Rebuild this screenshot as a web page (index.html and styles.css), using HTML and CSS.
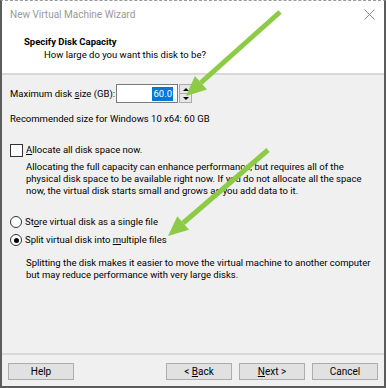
FILE: index.html
```html
<!DOCTYPE html>
<html lang="en">
<head>
    <meta charset="UTF-8">
    <title>New Virtual Machine Wizard</title>
    <link rel="stylesheet" href="styles.css">
</head>
<body>
    <div class="window">
        <div class="titlebar">
            <span>New Virtual Machine Wizard</span>
            <svg class="close" width="11" height="11" viewBox="0 0 11 11">
                <path d="M0.5 0.5 L10.5 10.5 M10.5 0.5 L0.5 10.5" stroke="#8a8a8a" stroke-width="1"/>
            </svg>
        </div>
        <div class="header">
            <div class="header-title">Specify Disk Capacity</div>
            <div class="header-sub">How large do you want this disk to be?</div>
        </div>
        <div class="content">
            <div class="size-row">
                <label>Maximum disk <u>s</u>ize (GB):</label>
                <div class="input-box"><span class="selected">60.0</span></div>
                <div class="spinner">
                    <div class="spin-btn"><span class="tri up"></span></div>
                    <div class="spin-btn"><span class="tri down"></span></div>
                </div>
            </div>
            <div class="recommended">Recommended size for Windows 10 x64: 60 GB</div>

            <div class="check-row">
                <span class="checkbox"></span>
                <span><u>A</u>llocate all disk space now.</span>
            </div>
            <p class="note">Allocating the full capacity can enhance performance, but requires all of the<br>physical disk space to be available right now. If you do not allocate all the space<br>now, the virtual disk starts small and grows as you add data to it.</p>

            <div class="radio-row first">
                <span class="radio"></span>
                <span>St<u>o</u>re virtual disk as a single file</span>
            </div>
            <div class="radio-row">
                <span class="radio checked"></span>
                <span>Split virtual disk into <u>m</u>ultiple files</span>
            </div>
            <p class="note split">Splitting the disk makes it easier to move the virtual machine to another computer<br>but may reduce performance with very large disks.</p>
        </div>
        <div class="footer">
            <button class="btn">Help</button>
            <div class="spacer"></div>
            <button class="btn">&lt; <u>B</u>ack</button>
            <button class="btn"><u>N</u>ext &gt;</button>
            <button class="btn">Cancel</button>
        </div>

        <svg class="arrows" width="386" height="388" viewBox="0 0 386 388">
            <line x1="280" y1="12" x2="201" y2="82.7" stroke="#8dcb47" stroke-width="5"/>
            <polygon points="186,96 207,89.4 194.9,76" fill="#8dcb47"/>
            <line x1="268" y1="150" x2="183.2" y2="223" stroke="#8dcb47" stroke-width="5"/>
            <polygon points="168,236 189,229.8 177.3,216.2" fill="#8dcb47"/>
        </svg>
    </div>
</body>
</html>
```

FILE: styles.css
```css
body {
    margin: 0;
    font-family: Roboto, 'Noto Sans', sans-serif;
    font-size: 9.5px;
    color: #000;
    background-color: #fff;
}
.window {
    position: relative;
    width: 386px;
    height: 388px;
    box-sizing: border-box;
    border: 2px solid #5c5c5c;
    border-top: 1px dashed #9a9a9a;
    display: flex;
    flex-direction: column;
    background-color: #fff;
    white-space: nowrap;
}
.titlebar {
    height: 27px;
    display: flex;
    align-items: center;
    justify-content: space-between;
    padding: 0 8px 0 8px;
    color: #999;
    font-size: 10px;
}
.close {
    margin-right: 1px;
    margin-top: -1px;
}
.header {
    height: 47px;
    box-sizing: border-box;
    padding-top: 8px;
    line-height: 12px;
    border-bottom: 2px solid #d8d8d8;
}
.header-title {
    font-weight: bold;
    padding-left: 22px;
}
.header-sub {
    padding-left: 42px;
    margin-top: 1px;
}
.content {
    flex: 1;
    background-color: #f0f0f0;
    padding: 0 8px;
    line-height: 12px;
}
.size-row {
    display: flex;
    align-items: center;
    margin-top: 9px;
    height: 19px;
}
.size-row label {
    width: 106px;
    flex-shrink: 0;
}
.input-box {
    width: 56px;
    height: 17px;
    background-color: #fff;
    border: 1px solid #7a7a7a;
    display: flex;
    align-items: center;
    justify-content: flex-end;
    padding-right: 4px;
}
.selected {
    background-color: #0078d7;
    color: #fff;
    padding: 1px 1px;
}
.spinner {
    width: 13px;
    height: 19px;
    margin-left: 1px;
    display: flex;
    flex-direction: column;
}
.spin-btn {
    flex: 1;
    background-color: #e6e6e6;
    border: 1px solid #acacac;
    display: flex;
    align-items: center;
    justify-content: center;
}
.spin-btn + .spin-btn {
    border-top: none;
}
.tri {
    width: 0;
    height: 0;
    border-left: 3px solid transparent;
    border-right: 3px solid transparent;
}
.tri.up {
    border-bottom: 3px solid #000;
}
.tri.down {
    border-top: 3px solid #000;
}
.recommended {
    margin-top: 10px;
}
.check-row, .radio-row {
    display: flex;
    align-items: center;
    gap: 3px;
    height: 12px;
}
.check-row {
    margin-top: 19px;
}
.checkbox {
    width: 11px;
    height: 11px;
    background-color: #fff;
    border: 1px solid #333;
}
.note {
    margin: 5px 0 0 16px;
}
.radio-row.first {
    margin-top: 19px;
}
.radio-row + .radio-row {
    margin-top: 6px;
}
.radio {
    width: 12px;
    height: 12px;
    box-sizing: border-box;
    border: 1px solid #333;
    border-radius: 50%;
    background-color: #fff;
    position: relative;
}
.radio.checked::after {
    content: "";
    position: absolute;
    left: 2.5px;
    top: 2.5px;
    width: 5px;
    height: 5px;
    border-radius: 50%;
    background-color: #000;
}
.note.split {
    margin-top: 11px;
}
.footer {
    height: 33px;
    box-sizing: border-box;
    border-top: 2px solid #d8d8d8;
    background-color: #f0f0f0;
    display: flex;
    align-items: flex-start;
    gap: 7px;
    padding: 8px 6px 0 6px;
}
.spacer {
    flex: 1;
}
.btn {
    width: 66px;
    height: 17px;
    padding: 0;
    font-family: inherit;
    font-size: 10px;
    background-color: #e1e1e1;
    border: 1px solid #adadad;
    color: #000;
}
.arrows {
    position: absolute;
    left: -2px;
    top: -1px;
    pointer-events: none;
}
```
